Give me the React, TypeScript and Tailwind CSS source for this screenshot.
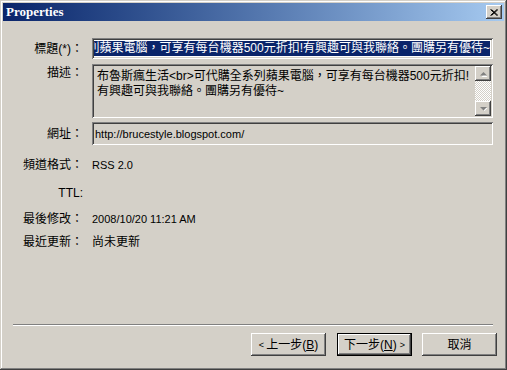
import React from "react";

const raised =
  "shadow-[inset_-1px_-1px_#404040,inset_1px_1px_#ffffff,inset_-2px_-2px_#808080,inset_2px_2px_#d4d0c8]";
const sunken =
  "shadow-[inset_1px_1px_#808080,inset_-1px_-1px_#ffffff,inset_2px_2px_#404040,inset_-2px_-2px_#d4d0c8]";

const fullTitle =
  "布魯斯瘋生活<br>可代購全系列蘋果電腦，可享有每台機器500元折扣!有興趣可與我聯絡。團購另有優待~";

function Label({ children, className = "" }: { children: React.ReactNode; className?: string }) {
  return (
    <div className={`w-[84px] shrink-0 text-right pr-[1px] text-[12px] leading-[16px] text-black ${className}`}>
      {children}
    </div>
  );
}

function Arrow({ up }: { up?: boolean }) {
  return (
    <svg width="9" height="6" viewBox="0 0 9 6" className="block">
      {up ? (
        <>
          <path d="M1.5 5 L4.5 2 L7.5 5 Z" fill="#ffffff" transform="translate(1,1)" />
          <path d="M1 4.5 L4.5 1 L8 4.5 Z" fill="#808080" />
        </>
      ) : (
        <>
          <path d="M1.5 1 L4.5 4 L7.5 1 Z" fill="#ffffff" transform="translate(1,1)" />
          <path d="M1 1 L4.5 4.5 L8 1 Z" fill="#808080" />
        </>
      )}
    </svg>
  );
}

export default function App() {
  return (
    <div
      className={`w-[507px] h-[370px] bg-[#d4d0c8] flex flex-col overflow-hidden font-['Liberation_Sans','Noto_Sans_CJK_TC',sans-serif] shadow-[inset_-1px_-1px_#404040,inset_1px_1px_#d4d0c8,inset_-2px_-2px_#808080,inset_2px_2px_#ffffff]`}
    >
      {/* Title bar */}
      <div className="mt-[3px] mx-[3px] h-[18px] flex items-center justify-between bg-gradient-to-r from-[#0a246a] to-[#a6caf0] pl-[3px] pr-[2px]">
        <span className="font-['Liberation_Serif',serif] font-bold text-[13px] leading-[18px] text-white">
          Properties
        </span>
        <div className={`w-[16px] h-[14px] bg-[#d4d0c8] flex items-center justify-center ${raised}`}>
          <svg width="8" height="7" viewBox="0 0 8 7" className="block">
            <path d="M0.5 0.5 L7 6.5 M1.5 0.5 L8 6.5 M7 0.5 L0.5 6.5 M8 0.5 L1.5 6.5" stroke="#000" strokeWidth="1" />
          </svg>
        </div>
      </div>

      {/* Form */}
      <div className="flex flex-col pr-[14px] mt-[17px]">
        {/* Title */}
        <div className="flex items-center h-[21px]">
          <Label>標題(*)：</Label>
          <div className={`ml-[8px] flex-1 min-w-0 h-[21px] bg-white p-[2px] ${sunken}`}>
            <div className="w-full h-full overflow-hidden whitespace-nowrap text-right [direction:rtl] pr-[1px] pt-[1px] text-[12px] leading-[15px]">
              <span className="inline-block align-top [direction:ltr] bg-[#0a246a] text-white text-[12px] leading-[15px]">
                {fullTitle}
              </span>
            </div>
          </div>
        </div>

        {/* Description */}
        <div className="flex items-start h-[54px] mt-[5px]">
          <Label className="pt-[1px]">描述：</Label>
          <div className={`ml-[8px] flex-1 h-[54px] p-[2px] flex ${sunken}`}>
            <div className="flex-1 pl-[3px] pt-[3px] text-[12px] leading-[15px] text-black">
              布魯斯瘋生活&lt;br&gt;可代購全系列蘋果電腦，可享有每台機器500元折扣!
              <br />
              有興趣可與我聯絡。團購另有優待~
            </div>
            <div className="w-[16px] flex flex-col">
              <div className={`h-[15px] bg-[#d4d0c8] flex items-center justify-center ${raised}`}>
                <Arrow up />
              </div>
              <div className="flex-1 bg-[repeating-conic-gradient(#ffffff_0_25%,#d4d0c8_0_50%)] bg-[length:2px_2px]" />
              <div className={`h-[15px] bg-[#d4d0c8] flex items-center justify-center ${raised}`}>
                <Arrow />
              </div>
            </div>
          </div>
        </div>

        {/* URL */}
        <div className="flex items-center h-[23px] mt-[4px]">
          <Label>網址：</Label>
          <div className={`ml-[8px] flex-1 h-[23px] p-[2px] flex items-center ${sunken}`}>
            <span className="pl-[1px] text-[11px] leading-[14px] text-black">http://brucestyle.blogspot.com/</span>
          </div>
        </div>

        <div className="flex items-center h-[18px] mt-[11px]">
          <Label>頻道格式：</Label>
          <span className="ml-[8px] text-[11px] leading-[14px] text-black">RSS 2.0</span>
        </div>

        <div className="flex items-center h-[18px] mt-[10px]">
          <Label className="text-[11px]">TTL:</Label>
        </div>

        <div className="flex items-center h-[18px] mt-[8px]">
          <Label>最後修改：</Label>
          <span className="ml-[8px] text-[11px] leading-[14px] text-black">2008/10/20 11:21 AM</span>
        </div>

        <div className="flex items-center h-[18px] mt-[5px]">
          <Label>最近更新：</Label>
          <span className="ml-[8px] text-[12px] leading-[16px] text-black">尚未更新</span>
        </div>
      </div>

      {/* Separator */}
      <div className="mt-auto ml-[13px] mr-[14px] h-[2px] border-t border-t-[#808080] border-b border-b-white" />

      {/* Buttons */}
      <div className="mt-[7px] mb-[14px] flex justify-end pr-[10px] gap-[10px]">
        <div className={`w-[75px] h-[23px] bg-[#d4d0c8] flex items-center justify-center text-[12px] leading-[16px] text-black ${raised}`}>
          <span className="text-[9px] mr-[2px]">&lt;</span>上一步(<u>B</u>)
        </div>
        <div className="w-[75px] h-[23px] border border-black ml-[1px]">
          <div className={`w-full h-full bg-[#d4d0c8] flex items-center justify-center text-[12px] leading-[16px] text-black ${raised}`}>
            下一步(<u>N</u>)<span className="text-[9px] ml-[3px]">&gt;</span>
          </div>
        </div>
        <div className={`w-[75px] h-[23px] bg-[#d4d0c8] flex items-center justify-center text-[12px] leading-[16px] text-black ${raised}`}>
          取消
        </div>
      </div>
    </div>
  );
}
